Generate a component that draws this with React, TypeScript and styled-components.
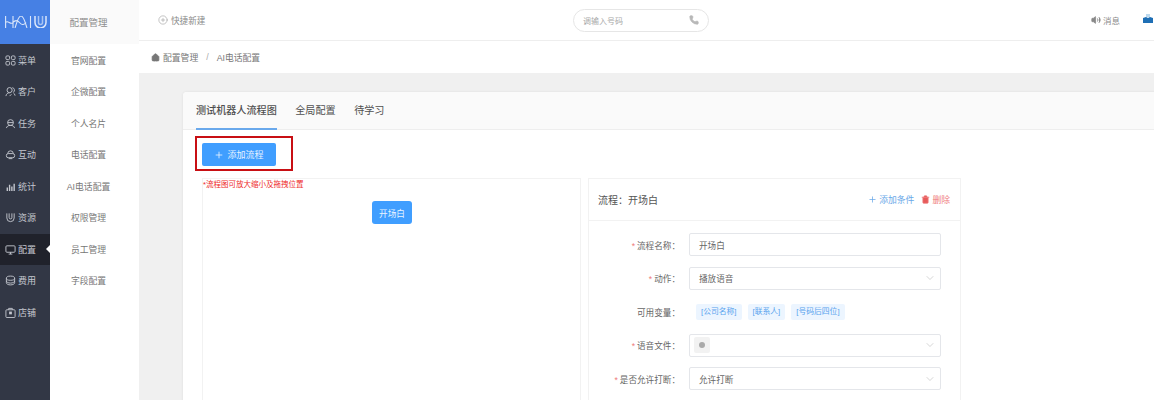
import React from "react";
import styled, { createGlobalStyle } from "styled-components";
import { ChevronDown, Plus, Trash2, Phone, Volume2, CirclePlus, Home } from "lucide-react";

const Global = createGlobalStyle`
  html, body { margin: 0; padding: 0; height: 400px; overflow: hidden; background: #fff; }
  body { font-family: "Liberation Sans", "Noto Sans CJK SC", sans-serif; }
  #root { height: 400px; }
  * { box-sizing: border-box; }
`;

const Page = styled.div`display: flex; width: 1154px; height: 400px; overflow: hidden;`;
const Rail = styled.nav`width: 50px; flex: none; background: #323745; display: flex; flex-direction: column;`;
const LogoBox = styled.div`height: 44px; background: #4680e4; display: flex; align-items: center; padding-left: 5px;`;
const RailList = styled.div`display: flex; flex-direction: column; padding-top: 0.5px;`;
const RailItem = styled.div<{ $active?: boolean }>`
  position: relative; height: 31.5px; display: flex; align-items: center; padding-left: 5px; gap: 2px;
  font-size: 9px; color: #c4c7cf;
  background: ${(p) => (p.$active ? "#20222b" : "transparent")};
  ${(p) => p.$active && `&::after { content: ""; position: absolute; right: 0; top: 50%; margin-top: -4px; border: 4px solid transparent; border-right-color: #fff; border-left: 0; }`}
`;
const Sub = styled.aside`width: 89px; flex: none; background: #fff; display: flex; flex-direction: column;`;
const SubHead = styled.div`height: 44px; background: #fafafa; display: flex; align-items: center; justify-content: center; padding-right: 12px; font-size: 9.5px; color: #8e8e8e;`;
const SubList = styled.div`display: flex; flex-direction: column; padding-top: 0.5px;`;
const SubItem = styled.div`height: 31.5px; display: flex; align-items: center; justify-content: center; padding-right: 12px; font-size: 8.8px; color: #767676;`;
const Main = styled.main`flex: 1; min-width: 0; display: flex; flex-direction: column;`;
const Top = styled.header`height: 41px; flex: none; border-bottom: 1px solid #eee; display: grid; grid-template-columns: 415px 136px 1fr; align-items: center; padding: 0 0 0 19px;`;
const Quick = styled.div`display: flex; align-items: center; gap: 3px; font-size: 8.6px; color: #8a8a8a;`;
const Search = styled.div`height: 23px; border: 1px solid #e6e6e6; border-radius: 12px; display: flex; align-items: center; justify-content: space-between; padding: 0 9px; font-size: 8px; color: #a8a8a8;`;
const TopRight = styled.div`display: flex; justify-content: flex-end; align-items: center;`;
const Msg = styled.div`display: flex; align-items: center; gap: 2px; font-size: 8.5px; color: #8a8a8a; margin-right: 22px;`;
const Avatar = styled.svg`margin: -5px 0 0 0; flex: none;`;
const Crumbs = styled.div`height: 32px; flex: none; display: flex; align-items: center; gap: 3px; padding-left: 12px; font-size: 8.8px; color: #777;`;
const Sep = styled.span`margin: 0 5px; color: #aaa;`;
const Content = styled.div`flex: 1; background: #f0f0f0; padding: 19px 0 0 44px; overflow: hidden;`;
const Card = styled.section`width: 1100px; height: 400px; background: #fff; border-radius: 4px 0 0 0; box-shadow: 0 0 3px rgba(0,0,0,.08);`;
const Tabs = styled.div`height: 38px; background: #fafafa; border-bottom: 1px solid #eee; display: flex; gap: 18.5px; padding-left: 13px; border-radius: 4px 0 0 0;`;
const Tab = styled.div<{ $active?: boolean }>`
  height: 38px; line-height: 37px; font-size: 10.1px; color: #4f4f4f; font-weight: ${(p) => (p.$active ? 500 : 400)};
  border-bottom: ${(p) => (p.$active ? "2px solid #6aa9ec" : "none")};
`;
const CardBody = styled.div`padding: 6px 0 0 12px;`;
const Mark = styled.div`display: inline-flex; border: 2px solid #c80f14; padding: 5px 15px 3px 5px; width: 98px; height: 35px;`;
const AddBtn = styled.button`
  width: 74px; height: 23px; border: 0; border-radius: 2px; background: #409eff; color: #e8f3ff;
  display: flex; align-items: center; justify-content: center; gap: 3px; font: inherit; font-size: 9px; padding: 0;
`;
const Panels = styled.div`display: flex; gap: 7px; margin-top: 7px; padding-left: 7px;`;
const Flow = styled.div`width: 379px; height: 300px; border: 1px solid #f2f2f2; position: relative;`;
const Hint = styled.div`font-size: 7.5px; color: #ee2a2a; line-height: 10px; position: absolute; top: 1px; left: 0;`;
const Node = styled.div`position: absolute; left: 169px; top: 22px; width: 40px; height: 23px; border-radius: 3px; background: #409eff; color: #eaf4ff; font-size: 8.6px; display: flex; align-items: center; justify-content: center;`;
const Detail = styled.div`width: 373px; border: 1px solid #f2f2f2; height: 300px;`;
const DetailHead = styled.div`height: 42px; border-bottom: 1px solid #f2f2f2; display: flex; align-items: center; justify-content: space-between; padding: 0 10px 0 9px; font-size: 10px; color: #555;`;
const Actions = styled.div`display: flex; align-items: center; gap: 7px; font-size: 8.8px;`;
const Act = styled.span<{ $c: string }>`display: flex; align-items: center; gap: 2px; color: ${(p) => p.$c};`;
const Form = styled.div`display: flex; flex-direction: column; gap: 10.5px; padding: 12px 0 0 0;`;
const Row = styled.div`display: flex; align-items: center; gap: 9px; height: 23px;`;
const Label = styled.div`width: 91px; text-align: right; font-size: 8.6px; color: #666; white-space: nowrap;`;
const Star = styled.span`color: #ee7a7a; margin-right: 2px;`;
const Field = styled.div`width: 252px; height: 23px; border: 1px solid #e4e6ea; border-radius: 2px; display: flex; align-items: center; justify-content: space-between; padding: 0 4px 0 9px; font-size: 8.6px; color: #666;`;
const TagRow = styled.div`display: flex; gap: 6px; padding-left: 7px;`;
const Tag = styled.span`height: 16px; padding: 0 5px; background: #ecf5ff; border-radius: 2px; color: #58a3ee; font-size: 7.8px; line-height: 16px; white-space: nowrap;`;
const Chip = styled.span`width: 16px; height: 16px; margin-left: -5px; border-radius: 2px; background: #f2f2f2; display: flex; align-items: center; justify-content: center;`;
const Dot = styled.span`width: 6px; height: 6px; border-radius: 50%; background: #aaa;`;

const s = { fill: "none", stroke: "currentColor", strokeWidth: 1 } as const;
const icons: Record<string, React.ReactNode> = {
  menu: <><rect x="1" y="1" width="4" height="4" rx="1.2" {...s}/><rect x="7" y="1" width="4" height="4" rx="1.2" {...s}/><rect x="1" y="7" width="4" height="4" rx="1.2" {...s}/><rect x="7" y="7" width="4" height="4" rx="1.2" {...s}/></>,
  user: <><circle cx="5" cy="4.5" r="2.8" {...s}/><path d="M1 11c.4-2.4 2-3.6 4-3.6M8 1.8a2.8 2.8 0 0 1 1.2 5M11 10.5c-.3-1.6-1-2.6-2-3.2M5 11l2-2" {...s}/></>,
  task: <><circle cx="6" cy="5" r="3.2" {...s}/><path d="M1.5 11c.6-2 2-3 4.5-3s3.900 1 4.500 3M3 5h6" {...s}/></>,
  talk: <><path d="M3 5a3 3 0 0 1 6 0" {...s}/><rect x="1.500" y="5" width="9" height="4.500" rx="2" {...s}/><path d="M4 10.500h4" {...s}/></>,
  chart: <><path d="M2.500 11V7M5 11V4M7.500 11V6M10 11V3" stroke="currentColor" strokeWidth="1.500"/></>,
  res: <><path d="M2 1.500v5a4 4 0 0 0 8 0v-5M4.500 1.500v4.500a1.500 1.500 0 0 0 3 0V1.500" {...s}/></>,
  conf: <><rect x="1" y="2" width="10" height="7" rx="1" {...s}/><path d="M6 9v2M4 11h4" {...s}/></>,
  fee: <><ellipse cx="6" cy="3.500" rx="4.500" ry="2.300" {...s}/><path d="M1.500 3.500v5c0 1.300 2 2.300 4.500 2.300s4.500-1 4.500-2.300v-5M1.500 6.500c0 1.300 2 2.300 4.500 2.300s4.500-1 4.500-2.300" {...s}/></>,
  shop: <><rect x="1" y="3" width="10" height="8.500" rx="1" {...s}/><path d="M4 3V1.500h4V3" {...s}/><rect x="4.500" y="5" width="3" height="3" fill="currentColor"/></>,
};
const RailIcon = ({ n }: { n: string }) => <svg width="11" height="11" viewBox="0 0 12 12">{icons[n]}</svg>;

const rail = [["menu","菜单"],["user","客户"],["task","任务"],["talk","互动"],["chart","统计"],["res","资源"],["conf","配置"],["fee","费用"],["shop","店铺"]];
const subs = ["官网配置","企微配置","个人名片","电话配置","AI电话配置","权限管理","员工管理","字段配置"];

export default function App() {
  return (
    <Page>
      <Global />
      <Rail>
        <LogoBox>
          <svg width="42" height="12" viewBox="0 0 42 12" fill="none" stroke="#dbe6fa" strokeWidth="1.100">
            <path d="M.6 0v12M8 0v12M.6 6.500C3 3.500 5.500 9.500 8 6.500S13 4.500 15 7s4.500 1.500 6-.5" />
            <path d="M10 12C11.500 8 13 0 16 0s4.500 8 6 12M25.500 0v12" />
            <path d="M30 0v6.500a5.500 5.500 0 0 0 11 0V0" strokeWidth="1.500" />
            <path d="M33.500 0v6.500a2 2 0 0 0 4 0V0" strokeWidth="1.500" stroke="#a9c4f2" />
          </svg>
        </LogoBox>
        <RailList>
          {rail.map(([i, t]) => (
            <RailItem key={t} $active={t === "配置"}><RailIcon n={i} />{t}</RailItem>
          ))}
        </RailList>
      </Rail>
      <Sub>
        <SubHead>配置管理</SubHead>
        <SubList>{subs.map((t) => <SubItem key={t}>{t}</SubItem>)}</SubList>
      </Sub>
      <Main>
        <Top>
          <Quick><CirclePlus size={10} strokeWidth={1.200} />快捷新建</Quick>
          <Search>调输入号码<Phone size={10} fill="#b8b8b8" stroke="#b8b8b8" /></Search>
          <TopRight>
            <Msg><Volume2 size={10} fill="#888" />消息</Msg>
            <Avatar width="12" height="14" viewBox="0 0 12 14"><path d="M1 7l3-1 2 1 2-1 3 1v5H1z" fill="#1f6fb5"/><path d="M4 6V3h4v3" fill="#bcd9ee"/></Avatar>
          </TopRight>
        </Top>
        <Crumbs><Home size={9} fill="#777" stroke="#777" />配置管理<Sep>/</Sep>AI电话配置</Crumbs>
        <Content>
          <Card>
            <Tabs>
              <Tab $active>测试机器人流程图</Tab>
              <Tab>全局配置</Tab>
              <Tab>待学习</Tab>
            </Tabs>
            <CardBody>
              <Mark><AddBtn><Plus size={10} />添加流程</AddBtn></Mark>
              <Panels>
                <Flow>
                  <Hint>*流程图可放大缩小及拖拽位置</Hint>
                  <Node>开场白</Node>
                </Flow>
                <Detail>
                  <DetailHead>
                    流程：开场白
                    <Actions>
                      <Act $c="#6aa8e8"><Plus size={9} />添加条件</Act>
                      <Act $c="#ef7b7b"><Trash2 size={9} fill="#e75a5a" />删除</Act>
                    </Actions>
                  </DetailHead>
                  <Form>
                    <Row><Label><Star>*</Star>流程名称：</Label><Field>开场白</Field></Row>
                    <Row><Label><Star>*</Star>动作：</Label><Field>播放语音<ChevronDown size={12} strokeWidth={1.200} color="#bbb" /></Field></Row>
                    <Row><Label>可用变量：</Label><TagRow><Tag>[公司名称]</Tag><Tag>[联系人]</Tag><Tag>[号码后四位]</Tag></TagRow></Row>
                    <Row><Label><Star>*</Star>语音文件：</Label><Field><Chip><Dot /></Chip><ChevronDown size={12} strokeWidth={1.200} color="#bbb" /></Field></Row>
                    <Row><Label><Star>*</Star>是否允许打断：</Label><Field>允许打断<ChevronDown size={12} strokeWidth={1.200} color="#bbb" /></Field></Row>
                  </Form>
                </Detail>
              </Panels>
            </CardBody>
          </Card>
        </Content>
      </Main>
    </Page>
  );
}
